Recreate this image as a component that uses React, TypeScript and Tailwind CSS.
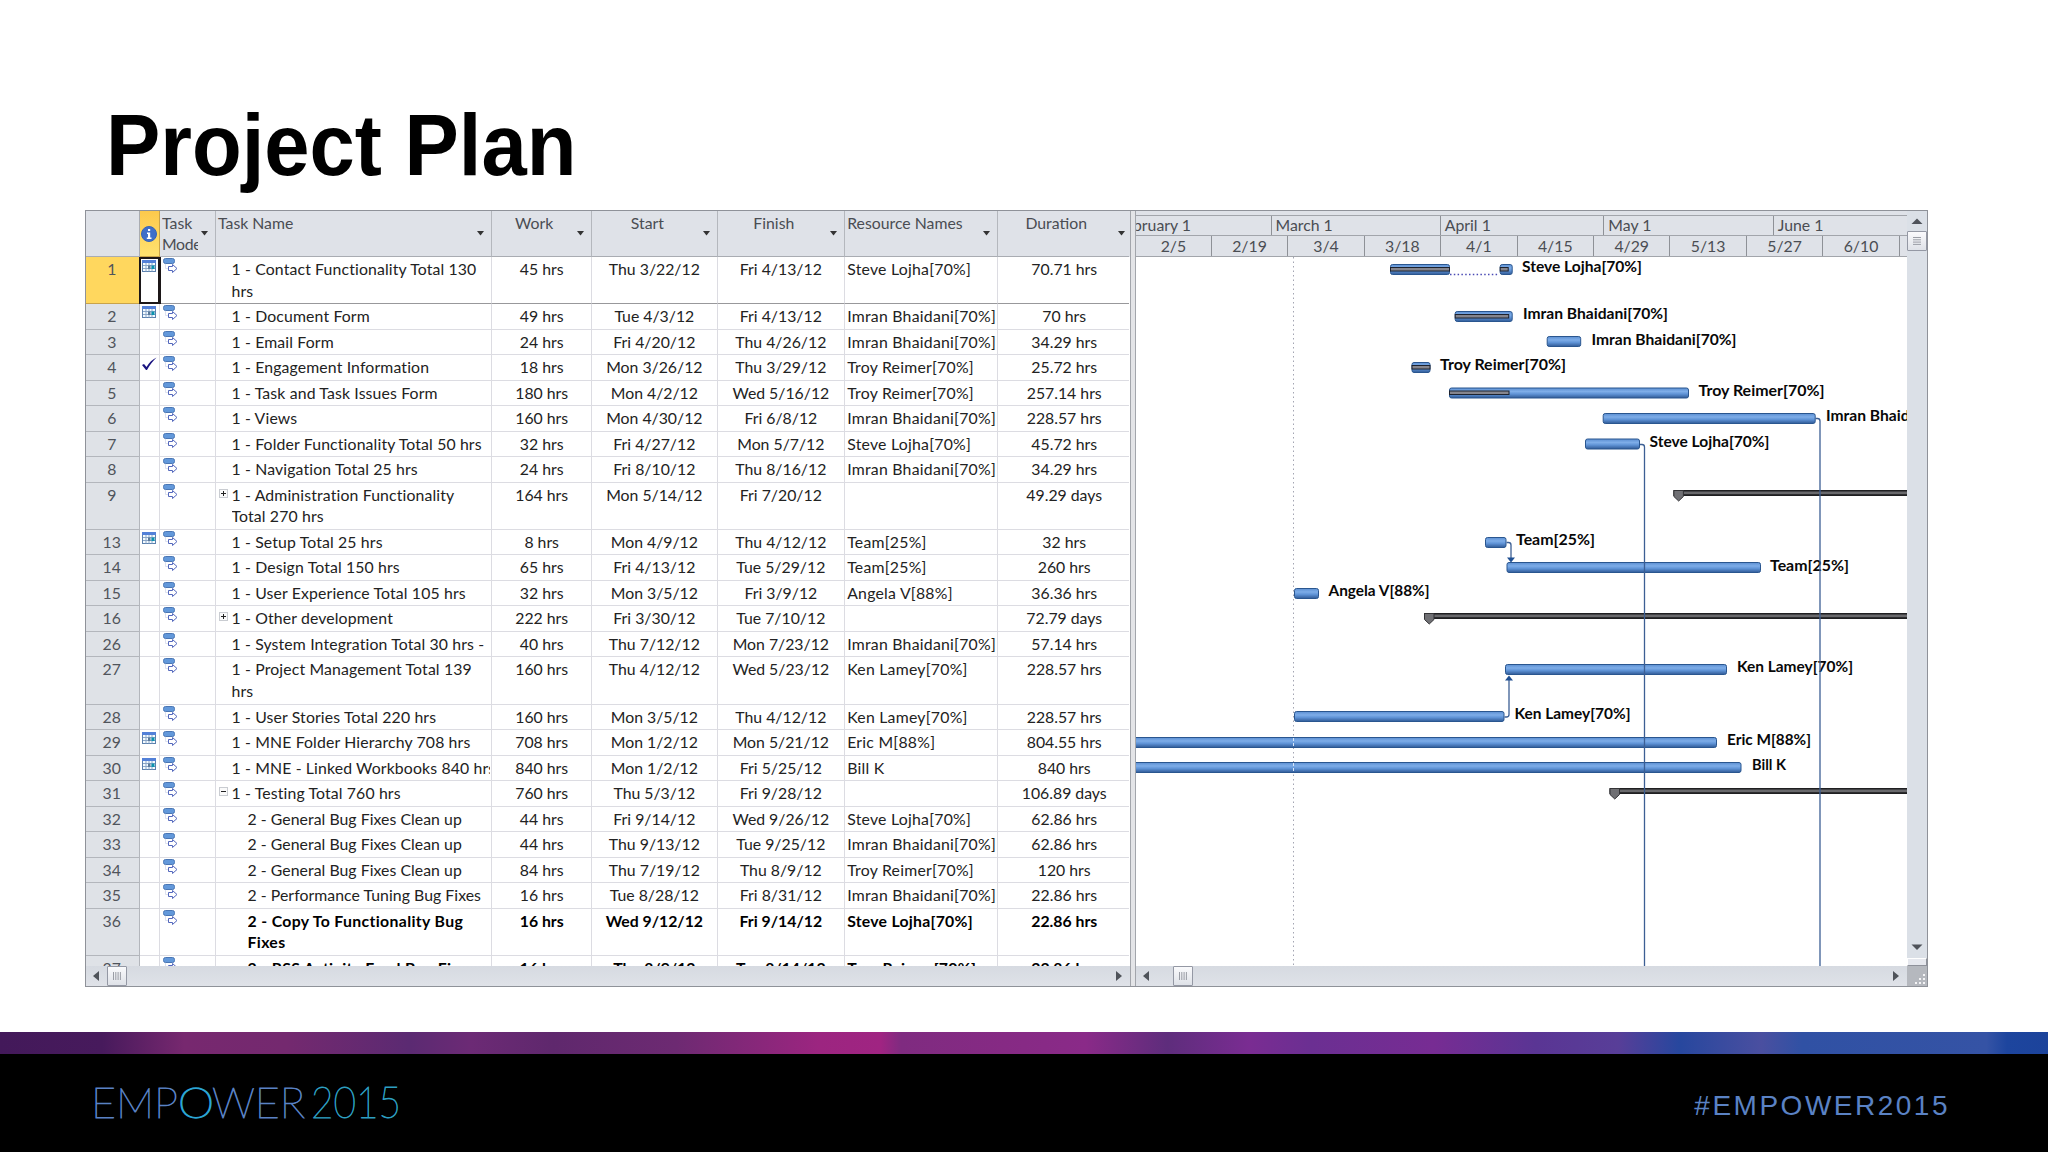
import clsx from 'clsx'

type Task = {
  id: number
  name: string
  work: string
  start: string
  finish: string
  resource?: string
  duration: string
  tall?: boolean
  bold?: boolean
  icon?: 'calendar' | 'check'
  toggle?: 'plus' | 'minus'
  level?: number
}

const tasks: Task[] = [
  { id: 1, name: '1 - Contact Functionality Total 130 hrs', work: '45 hrs', start: 'Thu 3/22/12', finish: 'Fri 4/13/12', resource: 'Steve Lojha[70%]', duration: '70.71 hrs', tall: true, icon: 'calendar' },
  { id: 2, name: '1 - Document Form', work: '49 hrs', start: 'Tue 4/3/12', finish: 'Fri 4/13/12', resource: 'Imran Bhaidani[70%]', duration: '70 hrs', icon: 'calendar' },
  { id: 3, name: '1 - Email Form', work: '24 hrs', start: 'Fri 4/20/12', finish: 'Thu 4/26/12', resource: 'Imran Bhaidani[70%]', duration: '34.29 hrs' },
  { id: 4, name: '1 - Engagement Information', work: '18 hrs', start: 'Mon 3/26/12', finish: 'Thu 3/29/12', resource: 'Troy Reimer[70%]', duration: '25.72 hrs', icon: 'check' },
  { id: 5, name: '1 - Task and Task Issues Form', work: '180 hrs', start: 'Mon 4/2/12', finish: 'Wed 5/16/12', resource: 'Troy Reimer[70%]', duration: '257.14 hrs' },
  { id: 6, name: '1 - Views', work: '160 hrs', start: 'Mon 4/30/12', finish: 'Fri 6/8/12', resource: 'Imran Bhaidani[70%]', duration: '228.57 hrs' },
  { id: 7, name: '1 - Folder Functionality Total 50 hrs', work: '32 hrs', start: 'Fri 4/27/12', finish: 'Mon 5/7/12', resource: 'Steve Lojha[70%]', duration: '45.72 hrs' },
  { id: 8, name: '1 - Navigation Total 25 hrs', work: '24 hrs', start: 'Fri 8/10/12', finish: 'Thu 8/16/12', resource: 'Imran Bhaidani[70%]', duration: '34.29 hrs' },
  { id: 9, name: '1 - Administration Functionality Total 270 hrs', work: '164 hrs', start: 'Mon 5/14/12', finish: 'Fri 7/20/12', duration: '49.29 days', tall: true, toggle: 'plus' },
  { id: 13, name: '1 - Setup Total 25 hrs', work: '8 hrs', start: 'Mon 4/9/12', finish: 'Thu 4/12/12', resource: 'Team[25%]', duration: '32 hrs', icon: 'calendar' },
  { id: 14, name: '1 - Design Total 150 hrs', work: '65 hrs', start: 'Fri 4/13/12', finish: 'Tue 5/29/12', resource: 'Team[25%]', duration: '260 hrs' },
  { id: 15, name: '1 - User Experience Total 105 hrs', work: '32 hrs', start: 'Mon 3/5/12', finish: 'Fri 3/9/12', resource: 'Angela V[88%]', duration: '36.36 hrs' },
  { id: 16, name: '1 - Other development', work: '222 hrs', start: 'Fri 3/30/12', finish: 'Tue 7/10/12', duration: '72.79 days', toggle: 'plus' },
  { id: 26, name: '1 - System Integration Total 30 hrs -', work: '40 hrs', start: 'Thu 7/12/12', finish: 'Mon 7/23/12', resource: 'Imran Bhaidani[70%]', duration: '57.14 hrs' },
  { id: 27, name: '1 - Project Management Total 139 hrs', work: '160 hrs', start: 'Thu 4/12/12', finish: 'Wed 5/23/12', resource: 'Ken Lamey[70%]', duration: '228.57 hrs', tall: true },
  { id: 28, name: '1 - User Stories Total 220 hrs', work: '160 hrs', start: 'Mon 3/5/12', finish: 'Thu 4/12/12', resource: 'Ken Lamey[70%]', duration: '228.57 hrs' },
  { id: 29, name: '1 - MNE Folder Hierarchy 708 hrs', work: '708 hrs', start: 'Mon 1/2/12', finish: 'Mon 5/21/12', resource: 'Eric M[88%]', duration: '804.55 hrs', icon: 'calendar' },
  { id: 30, name: '1 - MNE - Linked Workbooks 840 hrs', work: '840 hrs', start: 'Mon 1/2/12', finish: 'Fri 5/25/12', resource: 'Bill K', duration: '840 hrs', icon: 'calendar' },
  { id: 31, name: '1 - Testing Total 760 hrs', work: '760 hrs', start: 'Thu 5/3/12', finish: 'Fri 9/28/12', duration: '106.89 days', toggle: 'minus' },
  { id: 32, name: '2 - General Bug Fixes Clean up', work: '44 hrs', start: 'Fri 9/14/12', finish: 'Wed 9/26/12', resource: 'Steve Lojha[70%]', duration: '62.86 hrs', level: 2 },
  { id: 33, name: '2 - General Bug Fixes Clean up', work: '44 hrs', start: 'Thu 9/13/12', finish: 'Tue 9/25/12', resource: 'Imran Bhaidani[70%]', duration: '62.86 hrs', level: 2 },
  { id: 34, name: '2 - General Bug Fixes Clean up', work: '84 hrs', start: 'Thu 7/19/12', finish: 'Thu 8/9/12', resource: 'Troy Reimer[70%]', duration: '120 hrs', level: 2 },
  { id: 35, name: '2 - Performance Tuning Bug Fixes', work: '16 hrs', start: 'Tue 8/28/12', finish: 'Fri 8/31/12', resource: 'Imran Bhaidani[70%]', duration: '22.86 hrs', level: 2 },
  { id: 36, name: '2 - Copy To Functionality Bug Fixes', work: '16 hrs', start: 'Wed 9/12/12', finish: 'Fri 9/14/12', resource: 'Steve Lojha[70%]', duration: '22.86 hrs', level: 2, tall: true, bold: true },
  { id: 37, name: '2 - RSS Activity Feed Bug Fixes', work: '16 hrs', start: 'Thu 8/9/12', finish: 'Tue 8/14/12', resource: 'Troy Reimer[70%]', duration: '22.86 hrs', level: 2, bold: true },
]

const COLS = 'grid grid-cols-[53.5px_20.5px_56px_276.2px_100px_126.3px_126.7px_152.8px_131.5px]'

// Chart coordinates: x from the left edge of the gantt pane, y from the first row
type Bar = { y: number; x: number; w: number; done?: number }
const bars: Bar[] = [
  { y: 7, x: 254, w: 60, done: 60 },
  { y: 7, x: 363.7, w: 13, done: 9 },
  { y: 54, x: 318.7, w: 58, done: 54.5 },
  { y: 79, x: 410.7, w: 34.5 },
  { y: 105, x: 275.5, w: 19, done: 19 },
  { y: 130.5, x: 313, w: 240, done: 60.5 },
  { y: 156, x: 466.7, w: 213 },
  { y: 181.5, x: 449, w: 55 },
  { y: 280, x: 349, w: 21.5 },
  { y: 305, x: 370.5, w: 254.5 },
  { y: 331, x: 158, w: 25 },
  { y: 407, x: 369, w: 222 },
  { y: 454, x: 158, w: 210.5 },
  { y: 480, x: -10, w: 591 },
  { y: 505, x: -10, w: 615.5 },
]

const summaries = [
  { x: 537.4, y: 233 },
  { x: 288, y: 356 },
  { x: 473.5, y: 531 },
]

const labels = [
  { x: 386, y: 15, w: 120, text: 'Steve Lojha[70%]' },
  { x: 387, y: 62, w: 145, text: 'Imran Bhaidani[70%]' },
  { x: 455.5, y: 87.5, w: 145, text: 'Imran Bhaidani[70%]' },
  { x: 304, y: 113, w: 126, text: 'Troy Reimer[70%]' },
  { x: 562.5, y: 138.5, w: 126, text: 'Troy Reimer[70%]' },
  { x: 690, y: 164, w: 145, text: 'Imran Bhaidani[70%]' },
  { x: 513.5, y: 189.5, w: 120, text: 'Steve Lojha[70%]' },
  { x: 380, y: 288, w: 79, text: 'Team[25%]' },
  { x: 634, y: 313.5, w: 79, text: 'Team[25%]' },
  { x: 192.5, y: 339, w: 101, text: 'Angela V[88%]' },
  { x: 601, y: 415, w: 116, text: 'Ken Lamey[70%]' },
  { x: 378.5, y: 462, w: 116, text: 'Ken Lamey[70%]' },
  { x: 591, y: 487.5, w: 84, text: 'Eric M[88%]' },
  { x: 616, y: 513, w: 34, text: 'Bill K' },
]

const weeks = ['2/5', '2/19', '3/4', '3/18', '4/1', '4/15', '4/29', '5/13', '5/27', '6/10', '']

function CalendarIcon() {
  return (
    <svg className="ml-[2.5px] mt-[2px] h-3 w-[14px]" viewBox="0 0 14 12">
      <rect x="0.5" y="0.5" width="13" height="11" fill="#f4fbff" stroke="#5b80ad" />
      <rect width="14" height="3" fill="#5280d8" />
      <path d="M4 3v8.500M7 3v8.500M10 3v8.500M1 5.500h12M1 8.500h12" stroke="#8aa6c8" />
      <rect x="6" y="5.500" width="2.500" height="3.500" fill="#5c7a9a" />
      <rect x="9.500" y="5.500" width="3" height="3.500" fill="#0b93ae" />
    </svg>
  )
}

function CheckIcon() {
  return (
    <svg className="ml-[2.500px] mt-[2px] h-[15px] w-[15px]" viewBox="0 0 15 15">
      <path d="M0 8l2-1 2.500 3C7 5.500 10.500 2.500 14.500 .5 11 4 7.500 8 5 13H4z" fill="#1a1480" />
    </svg>
  )
}

function ModeIcon() {
  return (
    <svg className="ml-[3px] mt-[1px] h-[15px] w-[15px]" viewBox="0 0 15 15">
      <path d="M2.500 6v4.500h3" stroke="#dde1ee" fill="none" />
      <rect x="0.5" y="0.5" width="11" height="5" rx="2" fill="#6298da" stroke="#4a76b4" />
      <path d="M5.500 8.500h4V6.500l4.500 4-4.500 4v-2h-4z" fill="#fff" stroke="#5468bd" />
    </svg>
  )
}

function Toggle({ kind }: { kind: 'plus' | 'minus' }) {
  return (
    <svg className="absolute left-[3px] top-[6px] h-[9px] w-[9px]" viewBox="0 0 9 9">
      <rect x="0.5" y="0.5" width="8" height="8" fill="#fafafa" stroke="#c9ccd1" />
      <path d={kind === 'plus' ? 'M2 4.500h5M4.500 2v5' : 'M2 4.500h5'} stroke="#222" />
    </svg>
  )
}

function HeaderCell({ label, left, last }: { label: string; left?: boolean; last?: boolean }) {
  return (
    <div className={clsx('relative overflow-hidden border-b border-r border-b-[#a9acb2] border-r-[#b4b7bd] pt-px leading-[21px]', left ? 'pl-[2px]' : 'pr-[15px] text-center', last && 'border-r-0')}>
      <span className="block">{label}</span>
      <svg className={clsx('absolute bottom-[20px] h-[5px] w-[7px]', last ? 'right-[4px]' : 'right-[7px]')} viewBox="0 0 7 5">
        <path d="M0 0h7L3.500 4.500z" fill="#333" />
      </svg>
    </div>
  )
}

function Row({ task }: { task: Task }) {
  const selected = task.id === 1
  const cell = clsx('overflow-hidden whitespace-nowrap border-b border-r pt-px', selected ? 'border-b-[#98989b] border-r-[#dcdce2]' : 'border-[#dcdce2]')
  return (
    <div className={clsx(COLS, 'shrink-0 leading-[21.5px]', task.tall ? 'h-[47.2px]' : 'h-[25.5px]', task.bold ? 'font-bold text-black' : 'text-[#222]')}>
      <div className={clsx('border-b border-r pr-[1px] pt-px text-center font-normal text-[#50545b]', selected ? 'border-[#c9a349] bg-[#ffd75e]' : 'border-[#b3b6bc] bg-[#dfe2e7]')}>{task.id}</div>
      <div className={selected ? 'relative -ml-px -mr-px border-2 border-r-[3px] border-[#1c1718] bg-white' : 'border-b border-r border-[#dcdce2]'}>
        {task.icon === 'calendar' && (
          <div className={clsx(selected && '-ml-px -mt-[1px]')}>
            <CalendarIcon />
          </div>
        )}
        {task.icon === 'check' && <CheckIcon />}
      </div>
      <div className={clsx(cell, '!pt-0')}>
        <ModeIcon />
      </div>
      <div className={clsx(cell, 'relative pr-px', task.level === 2 ? 'pl-[31.500px]' : 'pl-[15.500px]', task.bold ? 'tracking-[0.35px]' : task.level === 2 ? 'tracking-[0.05px]' : 'tracking-[0.14px]')}>
        {task.toggle && <Toggle kind={task.toggle} />}
        <div className={clsx('overflow-hidden', task.tall && 'whitespace-normal', task.tall && (task.bold ? 'pr-5' : 'pr-1'))}>{task.name}</div>
      </div>
      <div className={clsx(cell, 'text-center')}>{task.work}</div>
      <div className={clsx(cell, 'pr-px text-center')}>{task.start}</div>
      <div className={clsx(cell, 'pr-px text-center')}>{task.finish}</div>
      <div className={clsx(cell, 'pl-[2px] tracking-[0.25px]')}>{task.resource}</div>
      <div className={clsx(cell, 'border-r-0 pl-px text-center')}>{task.duration}</div>
    </div>
  )
}

function Arrow({ dir }: { dir: 'left' | 'right' | 'up' | 'down' }) {
  const paths = { left: 'M9 1v10L3 6z', right: 'M3 1v10l6-5z', up: 'M0.5 9h11L6 3.500z', down: 'M0.5 3.500h11L6 9z' }
  return (
    <svg className="h-3 w-3 shrink-0" viewBox="0 0 12 12">
      <path d={paths[dir]} fill="#4f535a" />
    </svg>
  )
}

function Thumb({ vertical }: { vertical?: boolean }) {
  return (
    <div className="flex h-5 w-5 shrink-0 items-center justify-center rounded-[1px] border border-[#9498a4] bg-gradient-to-b from-[#fafafc] to-[#dfe2e8]">
      <svg className="h-2 w-2" viewBox="0 0 8 8">
        <path d={vertical ? 'M0 .5h8M0 2.800h8M0 5.100h8M0 7.400h8' : 'M.5 0v8M2.800 0v8M5.100 0v8M7.400 0v8'} stroke="#9a9da5" />
      </svg>
    </div>
  )
}

function TaskTable() {
  return (
    <div className="flex w-[1043.500px] shrink-0 flex-col">
      <div className={clsx(COLS, 'h-[46px] shrink-0 bg-[#dfe2e8] text-[#4a4d53]')}>
        <div className="border-b border-r border-[#a9acb2]" />
        <div className="flex items-center justify-center border-b border-r border-[#c9a349] bg-gradient-to-b from-[#fcc94c] to-[#ffe26f]">
          <svg className="h-4 w-4" viewBox="0 0 16 16">
            <circle cx="8" cy="8" r="7.500" fill="#3f6fc9" stroke="#3763b4" />
            <path d="M7 3h2.200v2H7zM6 6.500h3.200v5h1.300V13H5.800v-1.500H7V8H6z" fill="#fff" />
          </svg>
        </div>
        <div className="relative overflow-hidden border-b border-r border-[#b4b7bd] pl-[2px] pt-px leading-[21px]">
          <div className="w-[35.500px] overflow-hidden">
            Task
            <br />
            <span className="tracking-[-0.3px]">Mode</span>
          </div>
          <svg className="absolute bottom-[20px] right-[7px] h-[5px] w-[7px]" viewBox="0 0 7 5">
            <path d="M0 0h7L3.500 4.500z" fill="#333" />
          </svg>
        </div>
        <HeaderCell label="Task Name" left />
        <HeaderCell label="Work" />
        <HeaderCell label="Start" />
        <HeaderCell label="Finish" />
        <HeaderCell label="Resource Names" left />
        <HeaderCell label="Duration" last />
      </div>
      <div className="flex h-[709px] shrink-0 flex-col overflow-hidden">
        {tasks.map((task) => (
          <Row key={task.id} task={task} />
        ))}
      </div>
      <div className="flex h-5 items-center bg-gradient-to-b from-[#d6dae1] to-[#dfe2e8] pl-[4px] pr-[5px]">
        <Arrow dir="left" />
        <div className="ml-[5px]">
          <Thumb />
        </div>
        <div className="ml-auto">
          <Arrow dir="right" />
        </div>
      </div>
    </div>
  )
}

function GanttChart() {
  return (
    <svg className="block h-[709px] w-[771px] bg-white" viewBox="0 0 771 709">
      <defs>
        <linearGradient id="bar" x1="0" y1="0" x2="0" y2="1">
          <stop offset="0" stopColor="#5c8fd2" />
          <stop offset="0.35" stopColor="#7eade8" />
          <stop offset="0.6" stopColor="#5f93d6" />
          <stop offset="1" stopColor="#305a96" />
        </linearGradient>
      </defs>
      <path d="M157.500 0v709" stroke="#a3a5b2" strokeDasharray="1.500 3" />
      {/* Task bars */}
      {bars.map((bar, i) => (
        <g key={i}>
          <rect x={bar.x + 0.5} y={bar.y + 0.5} width={bar.w - 1} height="10" rx="2" fill="url(#bar)" stroke="#2a568f" />
          {bar.done && <rect x={bar.x + 0.5} y={bar.y + 3.5} width={bar.done - 1} height="3.5" fill="#85858d" stroke="#1d222e" />}
        </g>
      ))}
      <path d="M314 17.500h49" stroke="#4a4ab4" strokeWidth="1.500" strokeDasharray="1.500 2.300" />
      <path d="M157.500 481v9M157.500 506v9" stroke="#d8e6f8" strokeDasharray="3 2" />
      {/* Summary bars */}
      {summaries.map((s) => (
        <g key={s.y}>
          <rect x={s.x} y={s.y} width="600" height="6" fill="#1f1f21" />
          <rect x={s.x} y={s.y + 1.5} width="600" height="2.7" fill="#69696c" />
          <path d={`M${s.x + 0.5} ${s.y + 0.5}h9.500v6l-4.750 4.500-4.750-4.500z`} fill="#707074" stroke="#333336" />
        </g>
      ))}
      {/* Labels */}
      {labels.map((l) => (
        <text key={l.y} x={l.x} y={l.y} textLength={l.w} lengthAdjust="spacingAndGlyphs" className="fill-[#080808] text-[15.800px] font-bold">
          {l.text}
        </text>
      ))}
      {/* Links */}
      <g fill="none" stroke="#3c5f94" strokeWidth="1.300">
        <path d="M679.500 161.500h2q2.500 0 2.500 2.500v545" />
        <path d="M504 187.500h2q2.500 0 2.500 2.500v519" />
        <path d="M370.500 285.500h2q2.500 0 2.500 2.500v14" />
        <path d="M368.500 460h2q2.500 0 2.500-2.500V422" />
      </g>
      <path d="M371 300.500h8l-4 5zM369 423.500h8l-4-5z" fill="#1f4f92" />
    </svg>
  )
}

function GanttPane() {
  return (
    <div className="flex w-[770.500px] shrink-0 flex-col overflow-hidden">
      {/* Timescale */}
      <div className="flex h-[46px] shrink-0 flex-col overflow-hidden bg-[#dfe2e8] pt-1 text-[#4a4d53]">
        <div className="flex h-[21px] shrink-0 border-y border-[#a2a5ab] leading-[18px]">
          <div className="w-[135.500px] shrink-0 overflow-hidden border-r border-[#8e9197]">
            <div className="-ml-[3px] whitespace-nowrap">bruary 1</div>
          </div>
          <div className="w-[169.300px] shrink-0 border-r border-[#8e9197] pl-1">March 1</div>
          <div className="w-[163.500px] shrink-0 border-r border-[#8e9197] pl-1">April 1</div>
          <div className="w-[169.500px] shrink-0 border-r border-[#8e9197] pl-1">May 1</div>
          <div className="pl-1">June 1</div>
        </div>
        <div className="flex h-[21px] shrink-0 border-b border-[#a2a5ab] leading-[19px]">
          {weeks.map((week) => (
            <div key={week} className="w-[76.450px] shrink-0 border-r border-[#8e9197] text-center first:w-[75.800px]">
              {week}
            </div>
          ))}
        </div>
      </div>
      <GanttChart />
      <div className="flex h-5 items-center bg-gradient-to-b from-[#d6dae1] to-[#dfe2e8] pl-[4px] pr-[5px]">
        <Arrow dir="left" />
        <div className="ml-[21px]">
          <Thumb />
        </div>
        <div className="ml-auto">
          <Arrow dir="right" />
        </div>
      </div>
    </div>
  )
}

function VerticalScroll() {
  return (
    <div className="flex w-5 shrink-0 flex-col items-center bg-[#dbe0e7]">
      <div className="flex h-5 items-center">
        <Arrow dir="up" />
      </div>
      <Thumb vertical />
      <div className="mt-auto mb-[5px]">
        <Arrow dir="down" />
      </div>
      <div className="h-[8px] w-full border border-[#8e919a] border-l-white border-t-white bg-[#e6e8ee]" />
      <svg className="h-5 w-5 bg-[#b5b8be]" viewBox="0 0 20 20">
        <path d="M16 8h2v2h-2zM12 12h2v2h-2zM16 12h2v2h-2zM8 16h2v2H8zM12 16h2v2h-2zM16 16h2v2h-2z" fill="#f4f4f6" />
      </svg>
    </div>
  )
}

export default function App() {
  return (
    <div className="flex h-[1152px] w-[2048px] flex-col overflow-hidden bg-white">
      <h1 className="ml-[106px] mt-[92px] h-[118px] origin-left scale-x-[0.925] font-['Liberation_Sans'] text-[88px] font-bold leading-[106px] text-black">Project Plan</h1>
      {/* Project window */}
      <main className="ml-[85px] flex h-[777px] w-[1843px] shrink-0 overflow-hidden border border-[#8f9299] font-['Lato','Carlito',sans-serif] text-[15.800px]">
        <TaskTable />
        <div className="w-[6.500px] shrink-0 border-x border-[#a2a5ab] bg-[#e3e4e7]" />
        <GanttPane />
        <VerticalScroll />
      </main>
      {/* Footer */}
      <footer className="mt-auto">
        <div className="h-[22px] bg-[linear-gradient(90deg,#43195a_0%,#471a5c_5%,#77286f_9%,#74296f_14%,#5b2a72_20%,#6c2a75_23%,#5f286d_27%,#6d2a72_33%,#9c2580_40%,#a02482_43%,#7f2b80_44%,#862a84_49%,#8a2a88_53%,#5e2d7c_57%,#7a2c92_61%,#6b2f92_64%,#772c93_70%,#5a3594_75%,#583e98_79%,#27479e_82%,#4a4fa0_86%,#3051a4_88%,#3553a5_97%,#1d459e_98%,#1c439b_100%)]" />
        <div className="flex h-[98px] items-start justify-between bg-black">
          <svg className="ml-[92px] mt-[24px] h-[50px] w-[320px] font-['Lato'] font-thin" viewBox="0 0 320 50">
            <text x="-1" y="40" textLength="87" lengthAdjust="spacingAndGlyphs" fontSize="42" fill="#5a82c4" stroke="#5a82c4" strokeWidth="0.900">EMP</text>
            <text x="86" y="40" textLength="36" lengthAdjust="spacingAndGlyphs" fontSize="42" fill="#2ba5d4" stroke="#2ba5d4" strokeWidth="1.400">O</text>
            <text x="120" y="40" textLength="93" lengthAdjust="spacingAndGlyphs" fontSize="42" fill="#5a82c4" stroke="#5a82c4" strokeWidth="0.900">WER</text>
            <text x="219" y="39.500" textLength="90" lengthAdjust="spacingAndGlyphs" fontSize="44" fill="#2d9fc0" stroke="#2d9fc0" strokeWidth="0.900">2015</text>
          </svg>
          <span className="mr-[98px] mt-[35px] font-['Liberation_Sans'] text-[28px] leading-[34px] tracking-[2.500px] text-[#5a82c4]">#EMPOWER2015</span>
        </div>
      </footer>
    </div>
  )
}
